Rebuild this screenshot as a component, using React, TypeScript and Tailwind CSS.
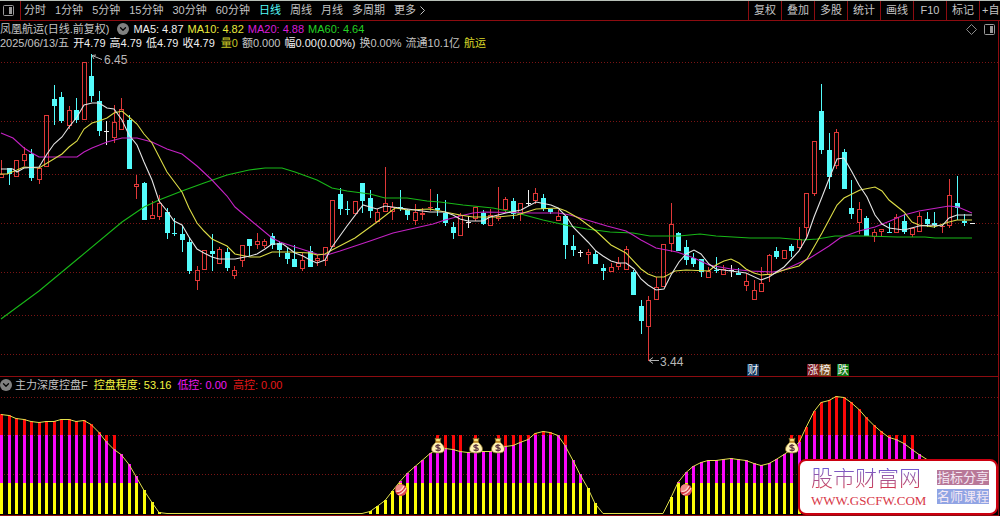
import { ReactNode } from "react";
import { ChevronDown } from "lucide-react";
import clsx from "clsx";

type Kind = "up" | "down" | "flat";
type Candle = [kind: Kind, high: number, top: number, bottom: number, low: number];

const STEP = 7.525;
const xAt = (i: number) => Math.round(1 + STEP * i);

// kind, high, body top, body bottom, low (all in chart units)
const candles: Candle[] = [
  ["up", 160, 174, 178, 178], ["down", 168, 168, 174, 185], ["up", 160, 160, 177, 177], ["up", 147, 154, 161, 166],
  ["down", 149, 154, 178, 181], ["up", 168, 168, 180, 184], ["up", 115, 115, 167, 167], ["down", 85, 99, 106, 125],
  ["down", 92, 97, 121, 123], ["up", 106, 110, 126, 129], ["down", 98, 110, 120, 123], ["up", 62, 62, 120, 120],
  ["down", 54, 76, 96, 102], ["down", 91, 101, 131, 136], ["flat", 121, 131, 132, 145], ["up", 105, 122, 138, 143],
  ["up", 98, 109, 130, 130], ["down", 115, 120, 169, 169], ["up", 175, 184, 187, 199], ["down", 182, 183, 220, 220],
  ["up", 201, 215, 219, 219], ["up", 195, 203, 217, 220], ["down", 208, 212, 233, 239], ["down", 218, 233, 234, 236],
  ["down", 226, 234, 240, 252], ["down", 237, 242, 271, 274], ["up", 266, 270, 281, 290], ["up", 250, 250, 270, 270],
  ["down", 234, 251, 254, 271], ["up", 247, 249, 264, 264], ["down", 248, 252, 268, 271], ["up", 266, 270, 276, 279],
  ["up", 245, 245, 261, 267], ["down", 239, 239, 246, 256], ["up", 233, 241, 245, 249], ["up", 239, 241, 246, 248],
  ["down", 233, 236, 245, 249], ["down", 241, 243, 250, 257], ["down", 248, 253, 259, 264], ["down", 245, 259, 267, 267],
  ["up", 253, 260, 269, 271], ["down", 246, 251, 267, 267], ["up", 255, 258, 261, 266], ["up", 247, 247, 261, 266],
  ["up", 200, 200, 247, 247], ["down", 188, 194, 209, 215], ["down", 201, 209, 210, 215], ["up", 201, 201, 214, 214],
  ["down", 183, 183, 201, 213], ["down", 190, 198, 211, 218], ["up", 209, 212, 222, 222], ["up", 167, 203, 212, 212],
  ["up", 202, 207, 212, 220], ["down", 190, 207, 209, 211], ["down", 209, 210, 215, 220], ["up", 204, 212, 221, 225],
  ["up", 208, 213, 215, 220], ["up", 189, 207, 208, 211], ["down", 194, 208, 210, 216], ["down", 200, 213, 223, 226],
  ["down", 222, 227, 233, 239], ["up", 213, 215, 236, 236], ["flat", 216, 222, 223, 228], ["up", 207, 207, 219, 221],
  ["down", 210, 213, 224, 225], ["up", 209, 215, 226, 226], ["up", 187, 216, 219, 221], ["up", 197, 199, 210, 212],
  ["down", 198, 201, 214, 219], ["up", 203, 203, 214, 221], ["flat", 190, 203, 204, 206], ["up", 188, 193, 201, 204],
  ["down", 194, 198, 209, 211], ["down", 209, 209, 212, 214], ["up", 210, 216, 221, 221], ["down", 216, 216, 245, 259],
  ["down", 235, 246, 250, 256], ["flat", 250, 252, 253, 257], ["up", 249, 252, 255, 264], ["down", 251, 254, 264, 264],
  ["down", 264, 268, 271, 280], ["up", 263, 267, 272, 272], ["up", 257, 263, 267, 270], ["up", 246, 249, 270, 270],
  ["down", 270, 272, 295, 295], ["down", 300, 306, 321, 334], ["up", 296, 300, 327, 361], ["up", 277, 287, 300, 300],
  ["up", 244, 244, 287, 287], ["up", 203, 224, 244, 252], ["down", 232, 233, 251, 251], ["down", 240, 247, 260, 265],
  ["down", 253, 258, 264, 267], ["down", 259, 259, 272, 277], ["up", 267, 271, 278, 278], ["down", 257, 270, 271, 273],
  ["up", 265, 269, 275, 275], ["flat", 265, 270, 271, 277], ["down", 268, 273, 275, 275], ["up", 274, 281, 286, 291],
  ["up", 280, 290, 300, 300], ["up", 267, 283, 292, 292], ["up", 254, 255, 275, 282], ["down", 247, 251, 257, 259],
  ["up", 250, 250, 259, 259], ["down", 244, 246, 251, 257], ["up", 227, 239, 248, 250], ["up", 193, 193, 228, 240],
  ["up", 141, 141, 194, 196], ["down", 84, 111, 150, 154], ["down", 133, 150, 177, 189], ["up", 129, 132, 166, 169],
  ["down", 149, 152, 189, 189], ["down", 180, 208, 214, 219], ["up", 202, 209, 223, 234], ["down", 216, 218, 236, 236],
  ["up", 229, 232, 237, 242], ["up", 229, 229, 232, 237], ["down", 223, 232, 233, 233], ["up", 214, 217, 233, 233],
  ["down", 214, 221, 232, 234], ["up", 228, 228, 235, 237], ["up", 212, 216, 232, 232], ["down", 212, 219, 224, 227],
  ["down", 212, 223, 225, 228], ["up", 225, 226, 227, 233], ["up", 179, 195, 226, 228], ["down", 176, 203, 208, 220],
  ["down", 214, 221, 223, 226], ["flat", 223, 223, 224, 224],
];

const averages = [
  {
    color: "#18b818",
    points:
      "1,319 39,291 80,257 122,222 144,207 159,200 182,191 204,183 227,175 249,170 265,168 282,168 295,172 317,180 332,188 347,191 370,194 385,198 407,198 427,201 440,202 463,205 493,208 517,213 543,220 570,226 587,229 610,232 633,233 650,236 679,236 700,234 716,236 750,238 780,238 803,240 817,239 835,236 867,236 897,237 925,237 935,238 972,238",
  },
  {
    color: "#c322c3",
    points:
      "1,133 13,138 24,148 32,153 39,157 77,157 84,152 92,148 107,142 122,138 137,138 152,142 167,149 182,154 197,166 212,180 227,196 235,207 242,213 272,238 280,242 295,247 317,254 327,255 340,251 370,241 393,233 415,228 433,224 445,220 460,216 473,213 483,212 533,213 558,213 570,215 587,220 607,226 626,231 633,235 641,240 656,248 677,252 694,258 709,265 731,269 750,271 773,272 784,270 799,263 810,258 829,246 840,238 859,231 875,227 890,221 904,215 919,211 949,206 958,207 972,213",
  },
  {
    color: "#dcdc46",
    points:
      "0,174 7,174 17,170 24,167 39,168 62,154 69,147 77,141 84,129 92,123 99,121 107,118 114,113 122,111 129,117 137,124 144,134 152,143 167,172 182,192 189,208 197,223 204,231 212,239 227,246 235,254 250,257 260,257 272,252 290,252 310,253 317,255 325,254 332,250 355,238 377,222 395,208 408,210 430,209 445,212 460,215 473,217 498,217 517,215 536,209 558,208 566,211 580,219 596,231 611,245 626,253 641,269 648,274 656,277 664,277 675,271 686,270 709,271 716,265 724,261 731,259 739,263 746,269 754,273 761,275 773,274 784,270 799,266 807,259 814,247 822,233 829,220 837,205 844,198 860,190 875,187 882,191 889,200 904,212 912,222 919,225 934,227 949,222 957,220 972,220",
  },
  {
    color: "#e4e4e4",
    points:
      "1,169 13,169 17,172 24,168 39,167 47,154 54,144 62,137 69,127 77,117 84,105 92,103 99,103 107,108 114,109 122,120 129,135 137,145 144,162 152,180 159,201 167,211 174,221 182,225 189,237 197,249 204,253 212,257 219,259 235,259 250,256 257,254 265,249 272,244 283,244 295,253 303,256 310,260 317,263 325,260 332,247 347,226 363,205 370,207 377,209 385,206 400,208 415,210 430,212 445,212 453,215 460,219 468,221 483,221 490,217 506,213 521,210 536,202 551,205 558,208 566,216 573,227 588,242 596,251 603,256 611,261 618,263 626,263 634,269 641,279 648,285 656,290 664,289 671,275 679,262 686,254 694,250 701,254 709,264 716,269 731,271 746,273 761,280 769,277 784,267 799,251 807,237 814,217 822,197 829,179 837,159 844,158 852,172 859,185 867,197 875,215 882,224 889,228 904,230 919,226 934,225 942,226 949,218 957,215 972,215",
  },
];

const candleFill: Record<Kind, string> = { up: "#e03838", down: "#54fcfc", flat: "#f0f0f0" };

// Indicator curve, one y per candle
const control: number[] = [
  414, 415, 418, 419, 421, 422, 421, 421, 419, 419, 421, 420, 424, 432, 441, 449, 454, 464, 476, 490, 502, 512,
  ...Array(27).fill(513),
  511, 506, 500, 491, 481, 473, 466, 460, 453, 449, 448, 449, 451, 452, 451, 451, 451, 449, 446, 445, 442, 439, 433,
  431, 432, 435, 445, 460, 474, 488, 503,
  ...Array(9).fill(513),
  497, 482, 472, 466, 462, 460, 460, 459, 458, 459, 460, 463, 465, 463, 459, 454, 449, 442, 427, 411, 402, 400, 396,
  397, 402, 409, 417, 425, 431, 437, 439, 443, 449, 454, 459, 465, 471, 476, 480, 483, 485,
];
const redHanging = new Set([14, 15, 58, 59, 60, 61, 63, 66, 67, 68, 69, 70, 75, 105, 106, 118, 119, 120, 121]);

const MID = 435;
const LOW = 483;
const BASE = 514;

const periods = ["分时", "1分钟", "5分钟", "15分钟", "30分钟", "60分钟", "日线", "周线", "月线", "多周期"];
const tools = ["复权", "叠加", "多股", "统计", "画线", "F10", "标记"];

const tags = [
  { x: 747, label: "财", bg: "#12395f" },
  { x: 807, label: "涨", bg: "#7c141c" },
  { x: 819, label: "榜", bg: "#7a4a1c" },
  { x: 837, label: "跌", bg: "#0c7a14" },
];

const PanelIcon = () => (
  <svg width="11" height="11" viewBox="0 0 11 11" fill="none" aria-hidden="true">
    <rect x="0.5" y="0.5" width="10" height="10" rx="1" stroke="#9a9a9a" />
    <rect x="6" y="2" width="3" height="7" fill="#9a9a9a" />
  </svg>
);

const RoundToggle = ({ label }: { label: string }) => (
  <button aria-label={label} className="flex size-3 shrink-0 items-center justify-center rounded-full bg-[#808080] text-black">
    <ChevronDown className="size-2.5" strokeWidth={3} />
  </button>
);

const Grid = ({ rows }: { rows: number[] }) => (
  <g stroke="#7a1414" strokeDasharray="1 2" shapeRendering="crispEdges">
    {rows.map((y) => (
      <line key={y} x1="1" x2="998" y1={y + 0.5} y2={y + 0.5} />
    ))}
  </g>
);

const MoneyBag = ({ x, y }: { x: number; y: number }) => (
  <g transform={`translate(${x} ${y})`}>
    <path d="M-3 -8 L-1 -7 L0 -8 L1 -7 L3 -8 L2 -4 L-2 -4 Z" fill="#f2dc78" stroke="#7d6420" strokeWidth="0.6" />
    <path d="M-2 -4 H2 C4 -2 6.5 0 6.5 3 C6.5 6 4 7 0 7 C-4 7 -6.5 6 -6.5 3 C-6.5 0 -4 -2 -2 -4 Z" fill="#fff3b4" stroke="#8a7024" strokeWidth="0.8" />
    <path d="M-2.5 -4 H2.5" stroke="#c88a20" strokeWidth="1.2" />
    <path d="M2.2 -0.2 C1 -1.4 -2.2 -1.2 -2.2 0.4 C-2.2 2 2.3 1.4 2.3 3.2 C2.3 4.9 -1.2 5 -2.4 3.6 M0 -2 V5.6" fill="none" stroke="#5c3440" strokeWidth="1.2" />
  </g>
);

const Ball = ({ x, y }: { x: number; y: number }) => (
  <g transform={`translate(${x} ${y})`}>
    <circle r="6" fill="#e04a50" />
    <circle cx="-1" cy="-1.5" r="4.2" fill="#f08c88" />
    <path d="M-5 1 C-2 2 1 0 3 -4 M-3 4.5 C0 4 3 2 5 -2" fill="none" stroke="#ffd8d4" strokeWidth="1.2" />
    <path d="M-4 3 C-1 3 2 1 4 -3" fill="none" stroke="#d02838" strokeWidth="1" />
  </g>
);

function PriceChart() {
  return (
    <svg viewBox="0 49 998 327" className="block h-auto w-full" role="img" aria-label="日线 K 线图">
      <Grid rows={[62, 121, 174, 223, 272, 315, 354]} />
      <g shapeRendering="crispEdges">
        {candles.map(([kind, high, top, bottom, low], i) => {
          const x = xAt(i);
          const color = candleFill[kind];
          const height = Math.max(bottom - top, 1);
          return (
            <g key={i}>
              {high < top && <rect x={x} y={high} width="1" height={top - high} fill={color} />}
              {low > bottom && <rect x={x} y={bottom} width="1" height={low - bottom} fill={color} />}
              {kind === "up" && height > 2 ? (
                <rect x={x - 1.5} y={top + 0.5} width="4" height={height - 1} fill="none" stroke={color} />
              ) : (
                <rect x={x - 2} y={top} width="5" height={height} fill={color} />
              )}
            </g>
          );
        })}
      </g>
      {averages.map((line) => (
        <polyline key={line.color} points={line.points} fill="none" stroke={line.color} strokeWidth="1.1" />
      ))}
      <g fill="none" stroke="#b4b4b4">
        <path d="M102 59.5 L92 55.5 M92 55.5 L96 55 M92 55.5 L94 59" />
        <path d="M659 360.5 H649 M653 357.5 L649 360.5 L653 363.5" />
      </g>
      <g className="text-xs" fill="#b8b8b8">
        <text x="104" y="64">6.45</text>
        <text x="660" y="366">3.44</text>
      </g>
      {tags.map((tag) => (
        <g key={tag.label}>
          <rect x={tag.x} y="364" width="12" height="12" fill={tag.bg} />
          <text x={tag.x + 6} y="374" textAnchor="middle" fill="#f0f0f0" className="text-[11px]">{tag.label}</text>
        </g>
      ))}
    </svg>
  );
}

function ControlChart() {
  return (
    <svg viewBox="0 393 998 122" className="block h-auto w-full" role="img" aria-label="主力深度控盘">
      <Grid rows={[397, 435, 474]} />
      <g shapeRendering="crispEdges">
        {control.map((y, i) => {
          const x = xAt(i) - 1;
          const magentaTop = Math.max(y, MID);
          const yellowTop = Math.max(y, LOW);
          return (
            <g key={i}>
              {y < MID && <rect x={x} y={y} width="3" height={MID - y} fill="#fb0808" />}
              {redHanging.has(i) && <rect x={x} y={MID} width="3" height={y - MID} fill="#fb0808" />}
              {y < LOW && <rect x={x} y={magentaTop} width="3" height={LOW - magentaTop} fill="#fa08fa" />}
              {y < 513 && <rect x={x} y={yellowTop} width="3" height={BASE - yellowTop} fill="#fdfd08" />}
            </g>
          );
        })}
      </g>
      <polyline
        points={control.map((y, i) => `${xAt(i)},${y + 0.5}`).join(" ")}
        fill="none"
        stroke="#e2e24c"
      />
      {[438, 476, 498, 792].map((x) => <MoneyBag key={x} x={x} y={446} />)}
      {[401, 686].map((x) => <Ball key={x} x={x} y={490} />)}
    </svg>
  );
}

const Stat = ({ className, children }: { className?: string; children: ReactNode }) => (
  <span className={clsx("shrink-0", className)}>{children}</span>
);

export default function App() {
  return (
    <div className="w-full overflow-hidden bg-black font-['Liberation_Sans','Noto_Sans_CJK_SC',sans-serif] text-[11px] leading-none whitespace-nowrap text-[#c4c4c4]">
      {/* Toolbar */}
      <header className="flex h-[21px] justify-between border-t border-b border-t-[#b8c0b8] border-b-[#8c0c10]">
        <div className="flex">
          <button aria-label="侧栏" className="flex w-[21px] items-center border-r border-[#8c0c10] pl-[3px]">
            <PanelIcon />
          </button>
          <nav className="flex items-center gap-[9px] pl-[3px]">
            {periods.map((p) => (
              <button key={p} className={clsx(p === "日线" && "text-[#54fcfc]")}>{p}</button>
            ))}
            <button className="flex items-center gap-1">
              更多
              <svg width="5" height="9" viewBox="0 0 5 9" fill="none" stroke="currentColor" aria-hidden="true">
                <path d="M0.5 0.5 L4.5 4.5 L0.5 8.5" />
              </svg>
            </button>
          </nav>
        </div>
        <div className="flex">
          {tools.map((t) => (
            <button key={t} className="w-[33px] border-l border-[#8c0c10]">{t}</button>
          ))}
          <button className="w-[21px] border-l border-[#8c0c10] pl-0.5 text-left">+自</button>
        </div>
      </header>

      <div className="pr-px">
        <main className="relative border-r border-b border-[#8c0c10]">
          {/* Quote lines */}
          <div className="flex h-4 items-center justify-between pr-[3px]">
            <div className="flex items-center gap-1">
              <Stat className="pr-1">凤凰航运(日线.前复权)</Stat>
              <RoundToggle label="主图指标" />
              <Stat className="text-[#f0f0f0]">MA5: 4.87</Stat>
              <Stat className="text-[#e8e83c]">MA10: 4.82</Stat>
              <Stat className="text-[#d81cd8]">MA20: 4.88</Stat>
              <Stat className="text-[#24d024]">MA60: 4.64</Stat>
            </div>
            <div className="flex items-center gap-[7px]">
              <svg width="11" height="11" viewBox="0 0 11 11" fill="none" stroke="#8a8a8a" aria-hidden="true">
                <path d="M5.5 0.5 L10.5 5.5 L5.5 10.5 L0.5 5.5 Z" />
              </svg>
              <PanelIcon />
            </div>
          </div>
          <div className="flex h-3 items-center gap-[6px]">
            <div className="flex gap-1">
              <Stat>2025/06/13/五</Stat>
              {["开4.79", "高4.79", "低4.79", "收4.79"].map((s) => (
                <Stat key={s} className="text-[#f0f0f0]">{s}</Stat>
              ))}
            </div>
            <div className="flex gap-1">
              <Stat className="text-[#c8c828]">量0</Stat>
              <Stat>额0.000</Stat>
              <Stat className="text-[#f0f0f0]">幅0.00(0.00%)</Stat>
              <Stat>换0.00%</Stat>
              <Stat>流通10.1亿</Stat>
              <Stat className="text-[#d8d828]">航运</Stat>
            </div>
          </div>

          <PriceChart />

          {/* Indicator panel */}
          <section className="border-t border-[#8c0c10]">
            <div className="flex h-4 items-center gap-[6px]">
              <div className="flex items-center gap-[3px]">
                <RoundToggle label="副图指标" />
                <Stat>主力深度控盘F</Stat>
              </div>
              <Stat className="text-[#f4f440]">控盘程度: 53.16</Stat>
              <Stat className="text-[#f018f0]">低控: 0.00</Stat>
              <Stat className="text-[#e41818]">高控: 0.00</Stat>
            </div>
            <ControlChart />
          </section>

          {/* Site card */}
          <aside className="absolute right-0 bottom-0 flex h-14 w-[200px] items-center justify-between rounded-lg border-2 border-[#cc0010] bg-white pr-[7px] pl-[11px]">
            <a href="#" className="flex flex-col gap-[5px]">
              <span className="bg-linear-to-b from-[#6a58d8] to-[#d82840] bg-clip-text text-[22px] leading-[22px] font-light text-transparent">
                股市财富网
              </span>
              <span className="font-['Liberation_Serif',serif] text-[13px] leading-3 text-[#d83848]">WWW.GSCFW.COM</span>
            </a>
            <div className="flex flex-col gap-1 text-[13px] leading-[15px] text-[#f4e8f4]">
              <span className="bg-[#b87898]">指标分享</span>
              <span className="bg-[#90a4e4]">名师课程</span>
            </div>
          </aside>
        </main>
      </div>
    </div>
  );
}
